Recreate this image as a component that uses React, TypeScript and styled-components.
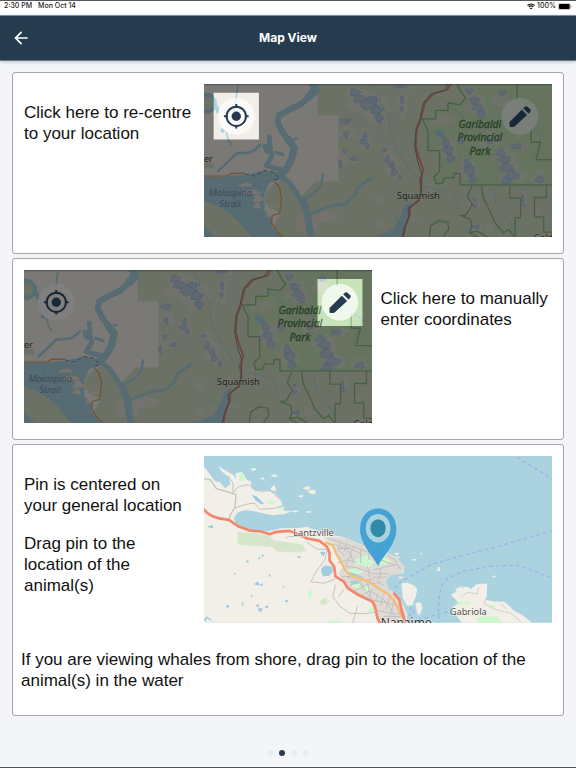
import React from "react";
import styled, { createGlobalStyle } from "styled-components";
import { MdArrowBack } from "react-icons/md";

const GlobalStyle = createGlobalStyle`
  * { box-sizing: border-box; }
  body {
    margin: 0;
    background: #f4f5f9;
    color: #111;
    font-family: "Liberation Sans", Arial, sans-serif;
  }
`;

const Page = styled.div`
  min-height: 100vh;
  display: flex;
  flex-direction: column;
  border-top: 1px solid #57575a;
  border-bottom: 1px solid #50554f;
`;

const StatusBar = styled.div`
  height: 14px;
  padding: 0 4px;
  display: flex;
  align-items: flex-start;
  justify-content: space-between;
  background: #fff;
  color: #1b1b1b;
  font: 500 7px/10px Inter, sans-serif;
`;

const StatusGroup = styled.div<{ $gap: number }>`
  display: flex;
  align-items: center;
  gap: ${(p) => p.$gap}px;
`;

const Header = styled.header`
  height: 46px;
  padding: 0 11px;
  display: grid;
  grid-template-columns: 1fr auto 1fr;
  align-items: center;
  background: #273b4f;
  border-top: 1px solid #7f8b96;
  border-bottom: 1px solid #6c7a87;
  box-shadow: 0 1px 3px rgba(39, 59, 79, 0.3);
  color: #fff;
`;

const BackButton = styled.button`
  display: flex;
  justify-self: start;
  padding: 0;
  border: 0;
  background: none;
  color: inherit;
  cursor: pointer;
`;

const Title = styled.h1`
  margin: 0;
  font: 700 12px/16px Inter, sans-serif;
`;

const Main = styled.main`
  display: flex;
  flex-direction: column;
  gap: 4px;
  padding: 11px 12px 0;
`;

const Card = styled.section<{ $bottom: number }>`
  padding: 11px 8px ${(p) => p.$bottom}px;
  border: 1px solid #a6a6aa;
  border-radius: 3px;
  background: #fff;
`;

const Columns = styled.div<{ $mapFirst?: boolean }>`
  display: grid;
  grid-template-columns: ${(p) => (p.$mapFirst ? "66% 1fr" : "1fr 66%")};
  column-gap: 8px;
  padding: 0 3px;
`;

const Copy = styled.div`
  display: flex;
  flex-direction: column;
  gap: 17px;
  padding-top: 18px;
`;

const Text = styled.p`
  margin: 0;
  font-size: 17px;
  line-height: 21px;
`;

const Note = styled(Text)`
  margin-top: 26px;
`;

const MapPicture = styled.svg`
  display: block;
  width: 100%;
  height: auto;
  font-family: "Noto Sans", "Open Sans", sans-serif;
`;

const Dots = styled.nav`
  display: flex;
  justify-content: center;
  gap: 6px;
  margin-top: auto;
  padding: 16px 0 11px;
`;

const Dot = styled.button<{ $active: boolean }>`
  width: 6px;
  height: 6px;
  padding: 0;
  border: 0;
  border-radius: 50%;
  background: ${(p) => (p.$active ? "#273b4f" : "#ebecee")};
  cursor: pointer;
`;

type Spot = [number, number, number, number];

/* Irregular closed outline, used for lakes, glaciers and islets. */
function blob([cx, cy, rx, ry]: Spot): string {
  const n = 16;
  const points: string[] = [];
  for (let i = 0; i < n; i++) {
    const a = (i / n) * Math.PI * 2;
    const k = 0.82 + 0.16 * Math.sin(a * 3 + cx * 0.37) + 0.1 * Math.sin(a * 5 + cy * 0.23);
    points.push(`${Math.round(cx + Math.cos(a) * rx * k)} ${Math.round(cy + Math.sin(a) * ry * k)}`);
  }
  return `M${points.join("L")}Z`;
}

const outline = (spots: Spot[]) => spots.map(blob).join("");

const BARE: Spot[] = [
  [480, 60, 60, 42], [520, 105, 40, 34], [492, 182, 26, 34], [440, 160, 28, 26], [436, 122, 26, 14],
  [425, 235, 20, 30], [458, 240, 16, 14], [530, 80, 40, 50], [605, 75, 18, 50], [610, 20, 34, 12],
  [560, 215, 22, 18], [575, 260, 28, 40], [590, 290, 18, 16], [735, 120, 30, 20], [830, 80, 40, 40],
  [808, 35, 24, 22], [745, 210, 34, 44], [800, 270, 38, 40], [870, 180, 44, 26], [915, 235, 44, 28],
  [935, 285, 50, 34], [1018, 295, 30, 24], [820, 375, 24, 18], [965, 360, 18, 26], [900, 60, 30, 26],
  [700, 130, 16, 14], [825, 445, 26, 14], [535, 360, 16, 12], [540, 440, 14, 16], [960, 200, 26, 14],
  [780, 180, 22, 20], [1010, 400, 16, 14], [690, 320, 14, 20], [870, 440, 24, 12], [640, 420, 20, 8],
];

const ICE: Spot[] = [
  [462, 38, 18, 12], [478, 58, 24, 13], [500, 78, 26, 14], [526, 92, 18, 16], [535, 118, 14, 14], [512, 58, 16, 9],
  [435, 124, 19, 10], [492, 168, 8, 12], [486, 186, 12, 9], [500, 198, 7, 9], [436, 165, 8, 12], [432, 215, 7, 8],
  [458, 238, 12, 7], [418, 252, 5, 13], [520, 62, 14, 14], [530, 90, 18, 14], [536, 116, 10, 12],
  [604, 60, 6, 14], [602, 88, 6, 10], [600, 20, 22, 5], [549, 212, 9, 7], [560, 240, 9, 14], [574, 258, 10, 12],
  [580, 278, 11, 12], [598, 294, 6, 8], [822, 64, 16, 14], [832, 84, 18, 12], [842, 104, 14, 12],
  [806, 34, 14, 10], [736, 188, 11, 18], [742, 212, 18, 14], [750, 236, 14, 14], [800, 252, 12, 16],
  [808, 274, 18, 18], [816, 298, 12, 16], [900, 220, 16, 12], [912, 240, 22, 12], [918, 264, 24, 16],
  [936, 288, 26, 16], [918, 304, 18, 12], [948, 200, 18, 9], [1018, 300, 16, 12], [822, 380, 8, 8],
  [822, 360, 5, 5], [965, 356, 6, 12], [968, 374, 5, 10], [828, 442, 12, 7], [905, 40, 12, 8], [780, 185, 9, 12],
  [868, 185, 10, 10],
];

const SOUND_ISLETS: Spot[] = [
  [135, 316, 24, 7], [152, 338, 32, 9], [172, 358, 20, 14], [168, 380, 14, 10], [205, 345, 12, 20], [222, 376, 18, 14],
  [200, 408, 7, 8],
];

type Highlight = "locate" | "edit";

function RegionMap({ highlight }: { highlight: Highlight }) {
  const hole = highlight === "locate" ? "M38 39H174V180H38Z" : "M891 40H1026V181H891Z";
  const label =
    highlight === "locate" ? "Map with the locate button highlighted" : "Map with the edit button highlighted";
  const locateColor = highlight === "locate" ? "#263a52" : "#192838";
  const editColor = highlight === "edit" ? "#263a52" : "#192838";
  return (
    <MapPicture viewBox="9 13 1047 460" role="img" aria-label={label}>
      <rect x="9" y="13" width="1047" height="460" fill="#f2ede7" />
      <path d="M350 13H1056V473H200L240 400L205 385L190 355L215 325L240 300L265 312L300 352L345 305H413V108H350Z" fill="#d3e0c7" />
      <path d="M288 405L380 395L412 405L410 420L352 430V455H288Z" fill="#e2dfd5" />
      <g transform="translate(510 0)">
        <path d="M258 13L275 42L285 55L268 75L232 70V92H195V118H155L172 155V213H207V275L190 292L195 312H215L222 295H250V282H268V316H545V13Z" fill="#c9e4bb" />
      </g>
      <path d={outline(BARE)} fill="#e4ddda" opacity="0.6" />
      <path d={outline(ICE)} fill="#bccfdc" stroke="#97bbe2" strokeWidth="2" />

      <g fill="none" stroke="#aad3df" strokeLinecap="round" strokeLinejoin="round">
        <path d="M334 8L344 30L325 50" strokeWidth="25" />
        <path d="M330 46L300 74L262 92L234 108L230 128L246 160L266 185" strokeWidth="18" />
        <path d="M262 180L280 205L272 240L255 270L240 286" strokeWidth="22" />
        <path d="M265 184L288 177" strokeWidth="7" />
        <path d="M205 172L207 200L212 232L196 258L222 266L250 272M192 200L198 215" strokeWidth="15" />
        <path d="M225 218L246 225" strokeWidth="10" />
        <path d="M52 274L92 236L105 222L150 218L164 210L178 196" strokeWidth="8" />
        <path d="M76 160L84 185L92 195M110 20L104 70L92 120" strokeWidth="5" />
        <path d="M236 286L268 312L290 345L306 372" strokeWidth="15" />
        <path d="M306 365L320 408L325 440L332 480" strokeWidth="22" />
        <path d="M326 405L380 382L436 372L462 348L470 325L510 296" strokeWidth="9" />
        <path d="M304 362L340 340L360 318L367 284" strokeWidth="7" />
        <path d="M230 286L200 310L186 345V385" strokeWidth="9" />
        <path d="M512 13L535 45L538 70L565 105L570 165L585 205L610 245L640 290L655 300" strokeWidth="3" />
        <path d="M660 318L720 330L760 340L775 385M740 80L770 92L790 120M880 325L885 370L930 430L945 465M560 400L585 410L600 440" strokeWidth="3" />
        <path d="M998 235L1010 205L1025 160L990 140L980 90" strokeWidth="3" />
      </g>
      <path d="M700 150L722 152L734 166L726 178L710 170Z" fill="#aad3df" />
      <path d="M9 292L70 291L140 284L190 273L235 280L240 300L205 308L184 335L188 390L214 418L212 440L240 473H9Z" fill="#aad3df" />
      <path d={outline(SOUND_ISLETS)} fill="#e5e3d9" />
      <path d="M198 335L220 312L240 330V375L218 380L192 372Z" fill="#d3e0c7" />
      <path d="M9 365L58 382L105 418L152 473H42L9 436Z" fill="#d3e0c7" />
      <path d="M9 38L32 42L48 62L46 88L22 104L9 102Z" fill="#aad3df" />
      <path d="M9 54L27 52L38 68L30 88L9 90Z" fill="#d3e0c7" />
      <path d="M9 248L36 252L42 266H9Z" fill="#d3e0c7" />
      <path d="M40 66L52 80L56 102L46 100ZM64 144L72 154L68 160L58 156Z" fill="#aad3df" />
      <path d="M510 471L540 467L580 448L603 405L606 385L632 366L636 380L622 410L612 440L605 475H510Z" fill="#aad3df" />
      <path d="M9 290L80 289L92 282L132 281" fill="none" stroke="#e0a36a" strokeWidth="4" />
      <path d="M132 283L160 289L190 273L216 277L236 296L214 306" fill="none" stroke="#7a86c8" strokeWidth="3" strokeDasharray="12 8" />
      <path d="M220 306L236 325L242 355L236 402L214 408L212 430L230 458L246 473" fill="none" stroke="#e0a36a" strokeWidth="4" />

      <g transform="translate(510 0)" fill="none" strokeLinejoin="round">
        <g stroke="#8dbb85" strokeWidth="4">
          <path d="M258 13L275 42L285 55L268 75L232 70V92H195V118H155L172 155V213H207V275L190 292L195 312H215L222 295H250V282H268V316H545" />
          <path d="M440 13V62M482 145V188H510L497 240H545" />
          <path d="M304 318L290 350L305 375L285 408H268L300 420L304 440L296 460L320 473" />
          <path d="M333 318L338 355L356 390L374 432L400 460L415 450L432 473" />
          <path d="M418 318V356H450V415H434V473M528 316V354H492V412H520V458H545" />
          <path d="M176 473L180 440L205 424L232 428L234 450L218 473M296 460L320 455L350 473" />
        </g>
        <path d="M243 8L230 30L188 42L162 70L150 120L138 150L135 200L148 245L158 270L148 300L152 335L145 362L116 385L118 405L104 440L98 473" stroke="#e08a80" strokeWidth="6" />
        <path d="M234 8L222 32L180 44L158 70L148 118L136 150L132 200L142 250L154 285L152 330L142 365L112 388L115 410L100 448L95 473" stroke="#888" strokeWidth="3" />
      </g>

      <g fontSize="27" fill="#444" stroke="#f2efe9" strokeWidth="3" paintOrder="stroke" strokeOpacity="0.6">
        <text x="9" y="248">er</text>
        <text x="653" y="358" textAnchor="middle" fontSize="28">Squamish</text>
        <text x="999" y="484">Gold</text>
      </g>
      <g fontSize="28" fontStyle="italic" textAnchor="middle" fill="#7391bd">
        <text x="88" y="351">Malaspina</text>
        <text x="88" y="384">Strait</text>
      </g>
      <g fontSize="31" fontStyle="italic" textAnchor="middle" fill="#4b7f4b" stroke="#4b7f4b">
        <text x="838" y="145">Garibaldi</text>
        <text x="838" y="185">Provincial</text>
        <text x="838" y="225">Park</text>
      </g>

      <circle cx="106" cy="110" r="55" fill="#fff" fillOpacity="0.72" />
      <circle cx="958" cy="110" r="55" fill="#fff" fillOpacity="0.72" />
      <path d={`M9 13H1056V473H9Z${hole}`} fill="#000" fillOpacity="0.49" fillRule="evenodd" />
      <path d="M9 15H1056" stroke="#000" strokeOpacity="0.25" strokeWidth="4" />

      <g fill="none" stroke={locateColor} strokeWidth="6">
        <circle cx="106" cy="110" r="29" />
        <path d="M106 73V84M106 136V147M69 110H80M132 110H143" />
      </g>
      <circle cx="106" cy="110" r="14" fill={locateColor} />
      <g fill={editColor}>
        <path d="M927 127L964 90L980 106L943 140Q941 142 938 142H930Q927 142 927 139Z" />
        <path d="M968 86L973 81Q977 78 981 81L989 89Q992 93 989 97L984 102Z" />
      </g>
    </MapPicture>
  );
}

const FIELD_PONDS: Spot[] = [
  [30, 230, 10, 5], [140, 335, 5, 4], [185, 318, 5, 4], [175, 325, 4, 4], [102, 372, 4, 3], [168, 402, 9, 6], [206, 377, 4, 4],
  [182, 405, 5, 5], [80, 470, 6, 5], [125, 462, 3, 7], [170, 468, 6, 5], [178, 480, 8, 7], [198, 472, 6, 5], [257, 454, 6, 5],
  [152, 440, 3, 4], [295, 322, 7, 3], [248, 412, 3, 4], [366, 311, 8, 8],
];

const SHOALS: Spot[] = [
  [158, 58, 9, 5], [220, 77, 12, 4], [185, 86, 7, 4], [318, 115, 12, 6], [334, 126, 14, 8], [300, 139, 10, 4], [282, 184, 14, 3],
  [324, 186, 9, 3], [218, 116, 9, 10], [714, 358, 5, 8], [880, 380, 7, 3], [640, 330, 8, 3], [662, 311, 4, 3], [588, 312, 8, 4],
  [592, 322, 7, 3], [600, 383, 9, 3], [318, 233, 9, 3],
];

const GREENS: Spot[] = [
  [122, 82, 10, 15], [328, 432, 8, 14], [392, 283, 14, 8], [490, 335, 36, 18], [460, 366, 30, 10], [498, 418, 12, 14],
  [212, 158, 20, 6], [240, 172, 12, 8], [470, 408, 18, 8], [512, 482, 12, 10], [398, 517, 22, 7], [545, 332, 24, 16],
];

function PinMap() {
  return (
    <MapPicture viewBox="9 18 1047 501" role="img" aria-label="Map with the pin near Nanaimo">
      <rect x="9" y="18" width="1047" height="501" fill="#aad3df" />
      <g fill="#f2efe9">
        <path d="M9 50L26 72L40 92L58 98L72 115L88 104L84 82L60 62L52 48L72 60L98 76L106 88L104 70L124 66L138 90L150 94L152 114L164 124L200 122L222 130L240 150L248 182L272 184L252 192L214 196L186 190L158 184L132 180L112 186L98 204L106 224L146 243L200 245L240 235L290 234L316 232L352 242L396 256L430 262L470 280L520 302L556 308L585 320L610 350L608 370L570 375L554 392L562 416L582 430L604 456L620 495L616 519H9Z" />
        <path d="M602 400L620 399L642 408L650 420L645 440L634 468L618 467L606 445Z" />
        <path d="M644 460L660 457L665 474L658 496L650 492Z" />
        <path d="M750 435L795 410L812 417L828 403L860 401L858 440L854 450L880 455L912 456L940 482L965 496L995 519H784L760 488L754 474L774 460L762 446Z" />
        <path d="M764 418L788 408L782 422L768 426Z" />
        <path d={outline(SHOALS)} />
      </g>
      <path d="M110 246L160 250L206 258L222 272L306 284L316 304L286 308L226 304L216 292L184 290L110 284Z" fill="#d5e6ca" />
      <path d="M368 262L430 262L520 300L555 308L590 322L608 350L605 370L570 376L554 394L564 418L584 432L606 460L618 500L614 519H534L525 470L515 453L470 435L430 400L412 370L430 350L415 320L395 285Z" fill="#dedbd7" />
      <path d={outline(GREENS)} fill="#cdf7d0" />
      <path d="M770 456L810 455V464H772ZM832 502L890 499L904 519H834ZM866 468L882 466L886 476L868 478Z" fill="#cdf7c9" />
      <path d="M358 452L376 442L380 456L392 450L372 466L358 464Z" fill="#d5e6ca" />
      <path d="M360 358L372 346L394 350L396 366L386 378L366 380Z" fill="#a2cddb" />
      <path d={outline(FIELD_PONDS)} fill="#9dcce0" />
      <path d="M152 134L168 140L190 162L182 164L164 152ZM9 510L16 500L24 504L36 516L28 512L18 506L12 516ZM440 365L470 374L490 384L465 382ZM448 394L468 392L474 402L452 402Z" fill="#9dcce0" />

      <g fill="none" stroke="#c5c3c1" strokeWidth="4" strokeLinejoin="round">
        <path d="M9 86L28 90L46 116L80 126L105 134L102 174L88 194L84 210" />
        <path d="M82 78L96 100V130L112 110L142 104L160 114L180 124L208 122L240 150M102 174L140 162L162 160L176 178L214 176L246 168" strokeWidth="3" />
        <path d="M254 266L262 260H300L330 270M318 276L348 298H380L372 330L348 362L330 396L370 400L404 388" strokeWidth="3" />
        <path d="M404 405L396 440L418 470L446 490L490 492L522 488M430 418L414 440M470 470L456 520" strokeWidth="3" />
      </g>
      <g fill="none" stroke="#c3c0be" strokeWidth="3">
        <path d="M384 266L420 278L456 290L490 302L528 318M400 282L440 300L452 316L436 340L440 352M418 272L412 300L432 318M438 276L430 306M462 286L448 312L460 340M480 296V340M504 304V330M410 296H452M426 286L482 312" />
        <path d="M410 340L440 330L466 338M430 350L470 354L520 372L566 372M438 382L470 392L500 430L528 470M424 380H462M444 410L480 390L520 390M460 424L500 404L540 398M480 438L516 418" />
        <path d="M520 360L552 352L588 344L600 360M516 382H560M528 390L552 410M510 424L550 450L572 480L590 519M532 432L524 456M548 434L540 468M566 440L556 480M580 452L566 510M520 452L560 460L600 470M530 482L570 490L612 494M548 500H604M560 318L582 330L598 356M540 330L580 345" />
        <path d="M500 400L510 440M480 392L490 420M500 350L508 386M540 356L536 388" />
        <path d="M780 444L800 428L830 432L834 412M854 450L850 462L886 480L930 490L960 515M900 462L920 480" strokeWidth="2" />
      </g>
      <g fill="none" stroke="#9db3ec" strokeWidth="4" strokeDasharray="11 9">
        <path d="M950 22L1056 88M1056 242L890 290L760 324L690 345L620 385L588 405L580 430" />
        <path d="M1050 383L992 360L950 346L860 350L790 364L742 385L722 410L714 450L714 519" />
        <path d="M740 486L680 502L640 515M632 470L620 519M640 480L628 519" />
      </g>
      <g fill="none" strokeLinejoin="round" strokeLinecap="round">
        <path d="M376 278L396 286L406 310L422 340L438 368L462 382L484 388L512 400L540 420L566 436L584 460L604 500" stroke="#f5bd76" strokeWidth="7" />
        <path d="M4 172C18 196 42 205 84 210L110 228L146 242L180 245L206 253L226 246L266 243L290 252L320 266L356 273L378 290L386 308V332L400 350L404 380L430 396L440 414L470 434L516 456L524 476L530 505L540 525" stroke="#f5866c" strokeWidth="8" />
        <path d="M581 432L596 450L602 480L614 519" stroke="#f5866c" strokeWidth="8" />
      </g>
      <g fill="#555" stroke="#f2efe9" strokeWidth="4" strokeOpacity="0.75" paintOrder="stroke">
        <text x="338" y="258" fontSize="28" textAnchor="middle">Lantzville</text>
        <text x="803" y="497" fontSize="28" textAnchor="middle">Gabriola</text>
        <text x="617" y="531" fontSize="36" textAnchor="middle" fill="#333">Nanaimo</text>
      </g>
      <path d="M532 349C518 318 478 284 478 237C478 202 501 176 532 176C563 176 587 202 587 237C587 284 546 318 532 349Z" fill="#44a2d5" />
      <ellipse cx="532" cy="235" rx="37" ry="43" fill="#aad3df" />
      <ellipse cx="532" cy="235" rx="23" ry="27" fill="#308aaa" />
    </MapPicture>
  );
}

function WifiIcon() {
  return (
    <svg width="8" height="7" viewBox="0 0 16 14" aria-hidden="true">
      <g fill="none" stroke="#111" strokeWidth="2.4">
        <path d="M1 5C5 1 11 1 15 5" />
        <path d="M3.7 8C6.2 5.6 9.8 5.6 12.3 8" />
      </g>
      <path d="M8 13L5.4 10.3C7 8.9 9 8.9 10.6 10.3Z" fill="#111" />
    </svg>
  );
}

function BatteryIcon() {
  return (
    <svg width="14" height="7" viewBox="0 0 28 14" aria-hidden="true">
      <rect x="0.7" y="0.7" width="24" height="12.6" rx="3" fill="none" stroke="#999" strokeWidth="1.2" />
      <rect x="2" y="2" width="21.4" height="10" rx="2" fill="#000" />
      <path d="M26 5V9C27.5 8.5 27.5 5.5 26 5Z" fill="#777" />
    </svg>
  );
}

export default function App() {
  const [step, setStep] = React.useState(1);
  return (
    <Page>
      <GlobalStyle />
      <StatusBar>
        <StatusGroup $gap={6}>
          <span>2:30 PM</span>
          <span>Mon Oct 14</span>
        </StatusGroup>
        <StatusGroup $gap={2}>
          <WifiIcon />
          <span>100%</span>
          <BatteryIcon />
        </StatusGroup>
      </StatusBar>
      <Header>
        <BackButton type="button" aria-label="Back">
          <MdArrowBack size={20} />
        </BackButton>
        <Title>Map View</Title>
      </Header>
      <Main>
        <Card $bottom={16}>
          <Columns>
            <Copy>
              <Text>Click here to re-centre to your location</Text>
            </Copy>
            <RegionMap highlight="locate" />
          </Columns>
        </Card>
        <Card $bottom={16}>
          <Columns $mapFirst>
            <RegionMap highlight="edit" />
            <Copy>
              <Text>Click here to manually enter coordinates</Text>
            </Copy>
          </Columns>
        </Card>
        <Card $bottom={24}>
          <Columns>
            <Copy>
              <Text>Pin is centered on your general location</Text>
              <Text>Drag pin to the location of the animal(s)</Text>
            </Copy>
            <PinMap />
          </Columns>
          <Note>
            If you are viewing whales from shore, drag pin to the location of the animal(s) in the water
          </Note>
        </Card>
      </Main>
      <Dots aria-label="Tutorial pages">
        {[0, 1, 2, 3].map((i) => (
          <Dot
            key={i}
            type="button"
            $active={i === step}
            aria-label={`Page ${i + 1}`}
            aria-current={i === step ? "step" : undefined}
            onClick={() => setStep(i)}
          />
        ))}
      </Dots>
    </Page>
  );
}
